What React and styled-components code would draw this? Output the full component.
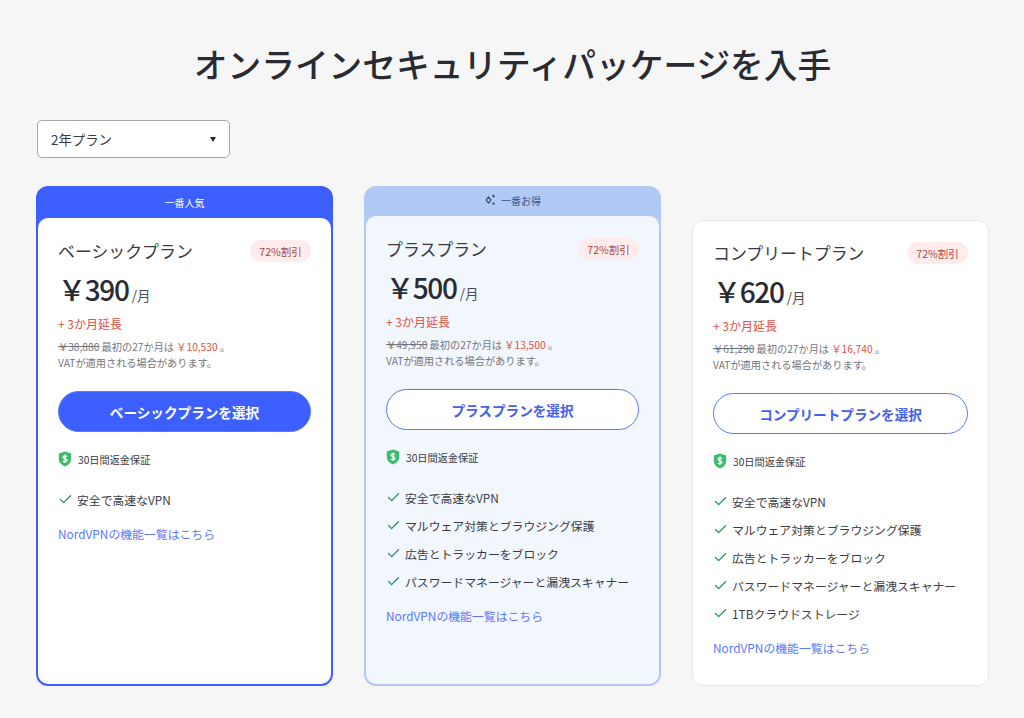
import React from 'react';
import styled, { createGlobalStyle } from 'styled-components';
import { Check } from 'lucide-react';

const YEN = '\uFFE5';

const plans = [
  {
    id: 'basic',
    name: 'ベーシックプラン',
    price: '390',
    full: '38,880',
    first: '10,530',
    cta: 'ベーシックプランを選択',
    features: ['安全で高速なVPN'],
  },
  {
    id: 'plus',
    name: 'プラスプラン',
    price: '500',
    full: '49,950',
    first: '13,500',
    cta: 'プラスプランを選択',
    features: ['安全で高速なVPN', 'マルウェア対策とブラウジング保護', '広告とトラッカーをブロック', 'パスワードマネージャーと漏洩スキャナー'],
  },
  {
    id: 'complete',
    name: 'コンプリートプラン',
    price: '620',
    full: '61,290',
    first: '16,740',
    cta: 'コンプリートプランを選択',
    features: ['安全で高速なVPN', 'マルウェア対策とブラウジング保護', '広告とトラッカーをブロック', 'パスワードマネージャーと漏洩スキャナー', '1TBクラウドストレージ'],
  },
];

const Shield = () => (
  <svg width="14" height="16" viewBox="0 0 14 16">
    <path d="M7 .6 13.2 2.6V8c0 3.6-2.7 6-6.2 7.4C3.500 14 .8 11.600.8 8V2.600Z" fill="#3dbb6e" />
    <path d="M9 5.700C8.500 5 7.700 4.800 7 4.800c-1.100 0-2 .5-2 1.500 0 2 4 1 4 3 0 1-.9 1.500-2 1.500-.8 0-1.600-.3-2.100-1M7 3.600v8.400" fill="none" stroke="#fff" strokeWidth="1.200" />
  </svg>
);

const Sparkle = () => (
  <svg width="12" height="12" viewBox="0 0 12 12" fill="none" stroke="#3f4f85" strokeWidth="1.200">
    <path d="M4.500 3 7 6 4.500 9 2 6Z" />
    <path d="M9.500 .8v2.800M8.100 2.200h2.800M9.500 8.400v2.400M8.300 9.600h2.400" />
  </svg>
);

const App = () => (
  <>
    <GlobalStyle />
    <Page>
      <Heading>オンラインセキュリティパッケージを入手</Heading>
      <Select>
        <span>2年プラン</span>
        <Caret />
      </Select>
      <Cards>
        {plans.map((plan) => (
          <Card key={plan.id} $variant={plan.id}>
            {plan.id === 'basic' && <Ribbon $variant="basic">一番人気</Ribbon>}
            {plan.id === 'plus' && (
              <Ribbon $variant="plus">
                <Sparkle />
                一番お得
              </Ribbon>
            )}
            <Body $variant={plan.id}>
              <TitleRow>
                <PlanName>{plan.name}</PlanName>
                <Badge>72%割引</Badge>
              </TitleRow>
              <PriceRow>
                <Amount>{YEN}{plan.price}</Amount>
                <Unit>/月</Unit>
              </PriceRow>
              <Bonus>+ 3か月延長</Bonus>
              <Note>
                <s>{YEN}{plan.full}</s> 最初の27か月は <Red>{YEN}{plan.first}</Red> 。
                <br />
                VATが適用される場合があります。
              </Note>
              <Cta $primary={plan.id === 'basic'}>{plan.cta}</Cta>
              <Guarantee>
                <Shield />
                30日間返金保証
              </Guarantee>
              <Features>
                {plan.features.map((f) => (
                  <Feature key={f}>
                    <Check size={15} color="#2b8f63" strokeWidth={2} />
                    {f}
                  </Feature>
                ))}
              </Features>
              <MoreLink href="#">NordVPNの機能一覧はこちら</MoreLink>
            </Body>
          </Card>
        ))}
      </Cards>
    </Page>
  </>
);

const GlobalStyle = createGlobalStyle`
  html, body {
    margin: 0;
    background: #f6f6f7;
  }
  body {
    font-family: "Noto Sans CJK JP", "Noto Sans", sans-serif;
    color: #2a2b32;
  }
`;

const Page = styled.div`
  width: 1024px;
  height: 718px;
  box-sizing: border-box;
  padding: 39px 35px 32px 36px;
  display: flex;
  flex-direction: column;
  overflow: hidden;
`;

const Heading = styled.h1`
  margin: 0;
  font-size: 33.700px;
  line-height: 50px;
  font-weight: 500;
  text-align: center;
  color: #2a2b32;
`;

const Select = styled.div`
  margin-top: 31px;
  margin-left: 1px;
  width: 193px;
  height: 38px;
  box-sizing: border-box;
  padding: 0 13px;
  display: flex;
  align-items: center;
  justify-content: space-between;
  background: #fff;
  border: 1px solid #a8a9b0;
  border-radius: 5px;
  font-size: 13.400px;
  color: #3a3b42;
`;

const Caret = styled.i`
  width: 0;
  height: 0;
  border-left: 3.500px solid transparent;
  border-right: 3.500px solid transparent;
  border-top: 5px solid #2a2b32;
`;

const Cards = styled.div`
  margin-top: 28px;
  flex: 1;
  display: grid;
  grid-template-columns: 297px 297px 297px;
  column-gap: 31px;
`;

const cardColor = { basic: '#3e5fff', plus: '#b1c9f5', complete: '#e8e8ea' };

const Card = styled.div`
  display: flex;
  flex-direction: column;
  box-sizing: border-box;
  margin-top: ${(p) => (p.$variant === 'complete' ? '34px' : '0')};
  border: ${(p) => (p.$variant === 'complete' ? '1px' : '2px')} solid ${(p) => cardColor[p.$variant]};
  border-radius: 12px;
  background: ${(p) => cardColor[p.$variant]};
`;

const Ribbon = styled.div`
  height: ${(p) => (p.$variant === 'basic' ? '29px' : '24px')};
  padding-bottom: ${(p) => (p.$variant === 'basic' ? '1px' : '4px')};
  display: flex;
  align-items: center;
  justify-content: center;
  gap: 5px;
  font-size: 10px;
  color: ${(p) => (p.$variant === 'basic' ? '#fff' : '#3f4f85')};
`;

const Body = styled.div`
  flex: 1;
  padding: ${(p) => (p.$variant === 'complete' ? '19px' : '20px')} 20px 0;
  border-radius: 10px;
  background: ${(p) => (p.$variant === 'plus' ? '#f2f6fd' : '#fff')};
`;

const TitleRow = styled.div`
  display: flex;
  align-items: center;
  justify-content: space-between;
  height: 26px;
`;

const PlanName = styled.div`
  padding-bottom: 2px;
  font-size: 16.900px;
  color: #3a3b42;
`;

const Badge = styled.div`
  width: 61px;
  height: 22px;
  border-radius: 11px;
  display: flex;
  align-items: center;
  justify-content: center;
  background: #fdeceb;
  color: #a8453f;
  font-size: 10.500px;
`;

const PriceRow = styled.div`
  margin-top: 5px;
  height: 40px;
  display: flex;
  align-items: baseline;
  gap: 3px;
`;

const Amount = styled.span`
  font-size: 28px;
  line-height: 41px;
  font-weight: 500;
  letter-spacing: -1.300px;
`;

const Unit = styled.span`
  font-size: 13.500px;
  color: #4a4b52;
`;

const Bonus = styled.div`
  margin-top: 5px;
  font-size: 12px;
  line-height: 20px;
  color: #e0503f;
`;

const Note = styled.p`
  margin: 5px 0 0;
  font-size: 10.200px;
  line-height: 16px;
  color: #74757c;
`;

const Red = styled.span`
  color: #e0503f;
`;

const Cta = styled.button`
  display: block;
  width: 100%;
  height: 41px;
  margin-top: 20px;
  border-radius: 21px;
  border: 1px solid #5a78f5;
  background: ${(p) => (p.$primary ? '#3e5fff' : '#fff')};
  color: ${(p) => (p.$primary ? '#fff' : '#4460f0')};
  font-family: inherit;
  font-size: 13.600px;
  font-weight: 700;
`;

const Guarantee = styled.div`
  margin-top: 19px;
  height: 16px;
  display: flex;
  align-items: center;
  gap: 6px;
  font-size: 10.200px;
  color: #3a3b42;
`;

const Features = styled.ul`
  list-style: none;
  margin: 18px 0 0;
  padding: 0;
`;

const Feature = styled.li`
  height: 28px;
  display: flex;
  align-items: center;
  gap: 4px;
  font-size: 11.850px;
  color: #3a3b42;
`;

const MoreLink = styled.a`
  display: block;
  margin-top: 11px;
  font-size: 11.850px;
  line-height: 20px;
  color: #5c78fa;
  text-decoration: none;
`;

export default App;
